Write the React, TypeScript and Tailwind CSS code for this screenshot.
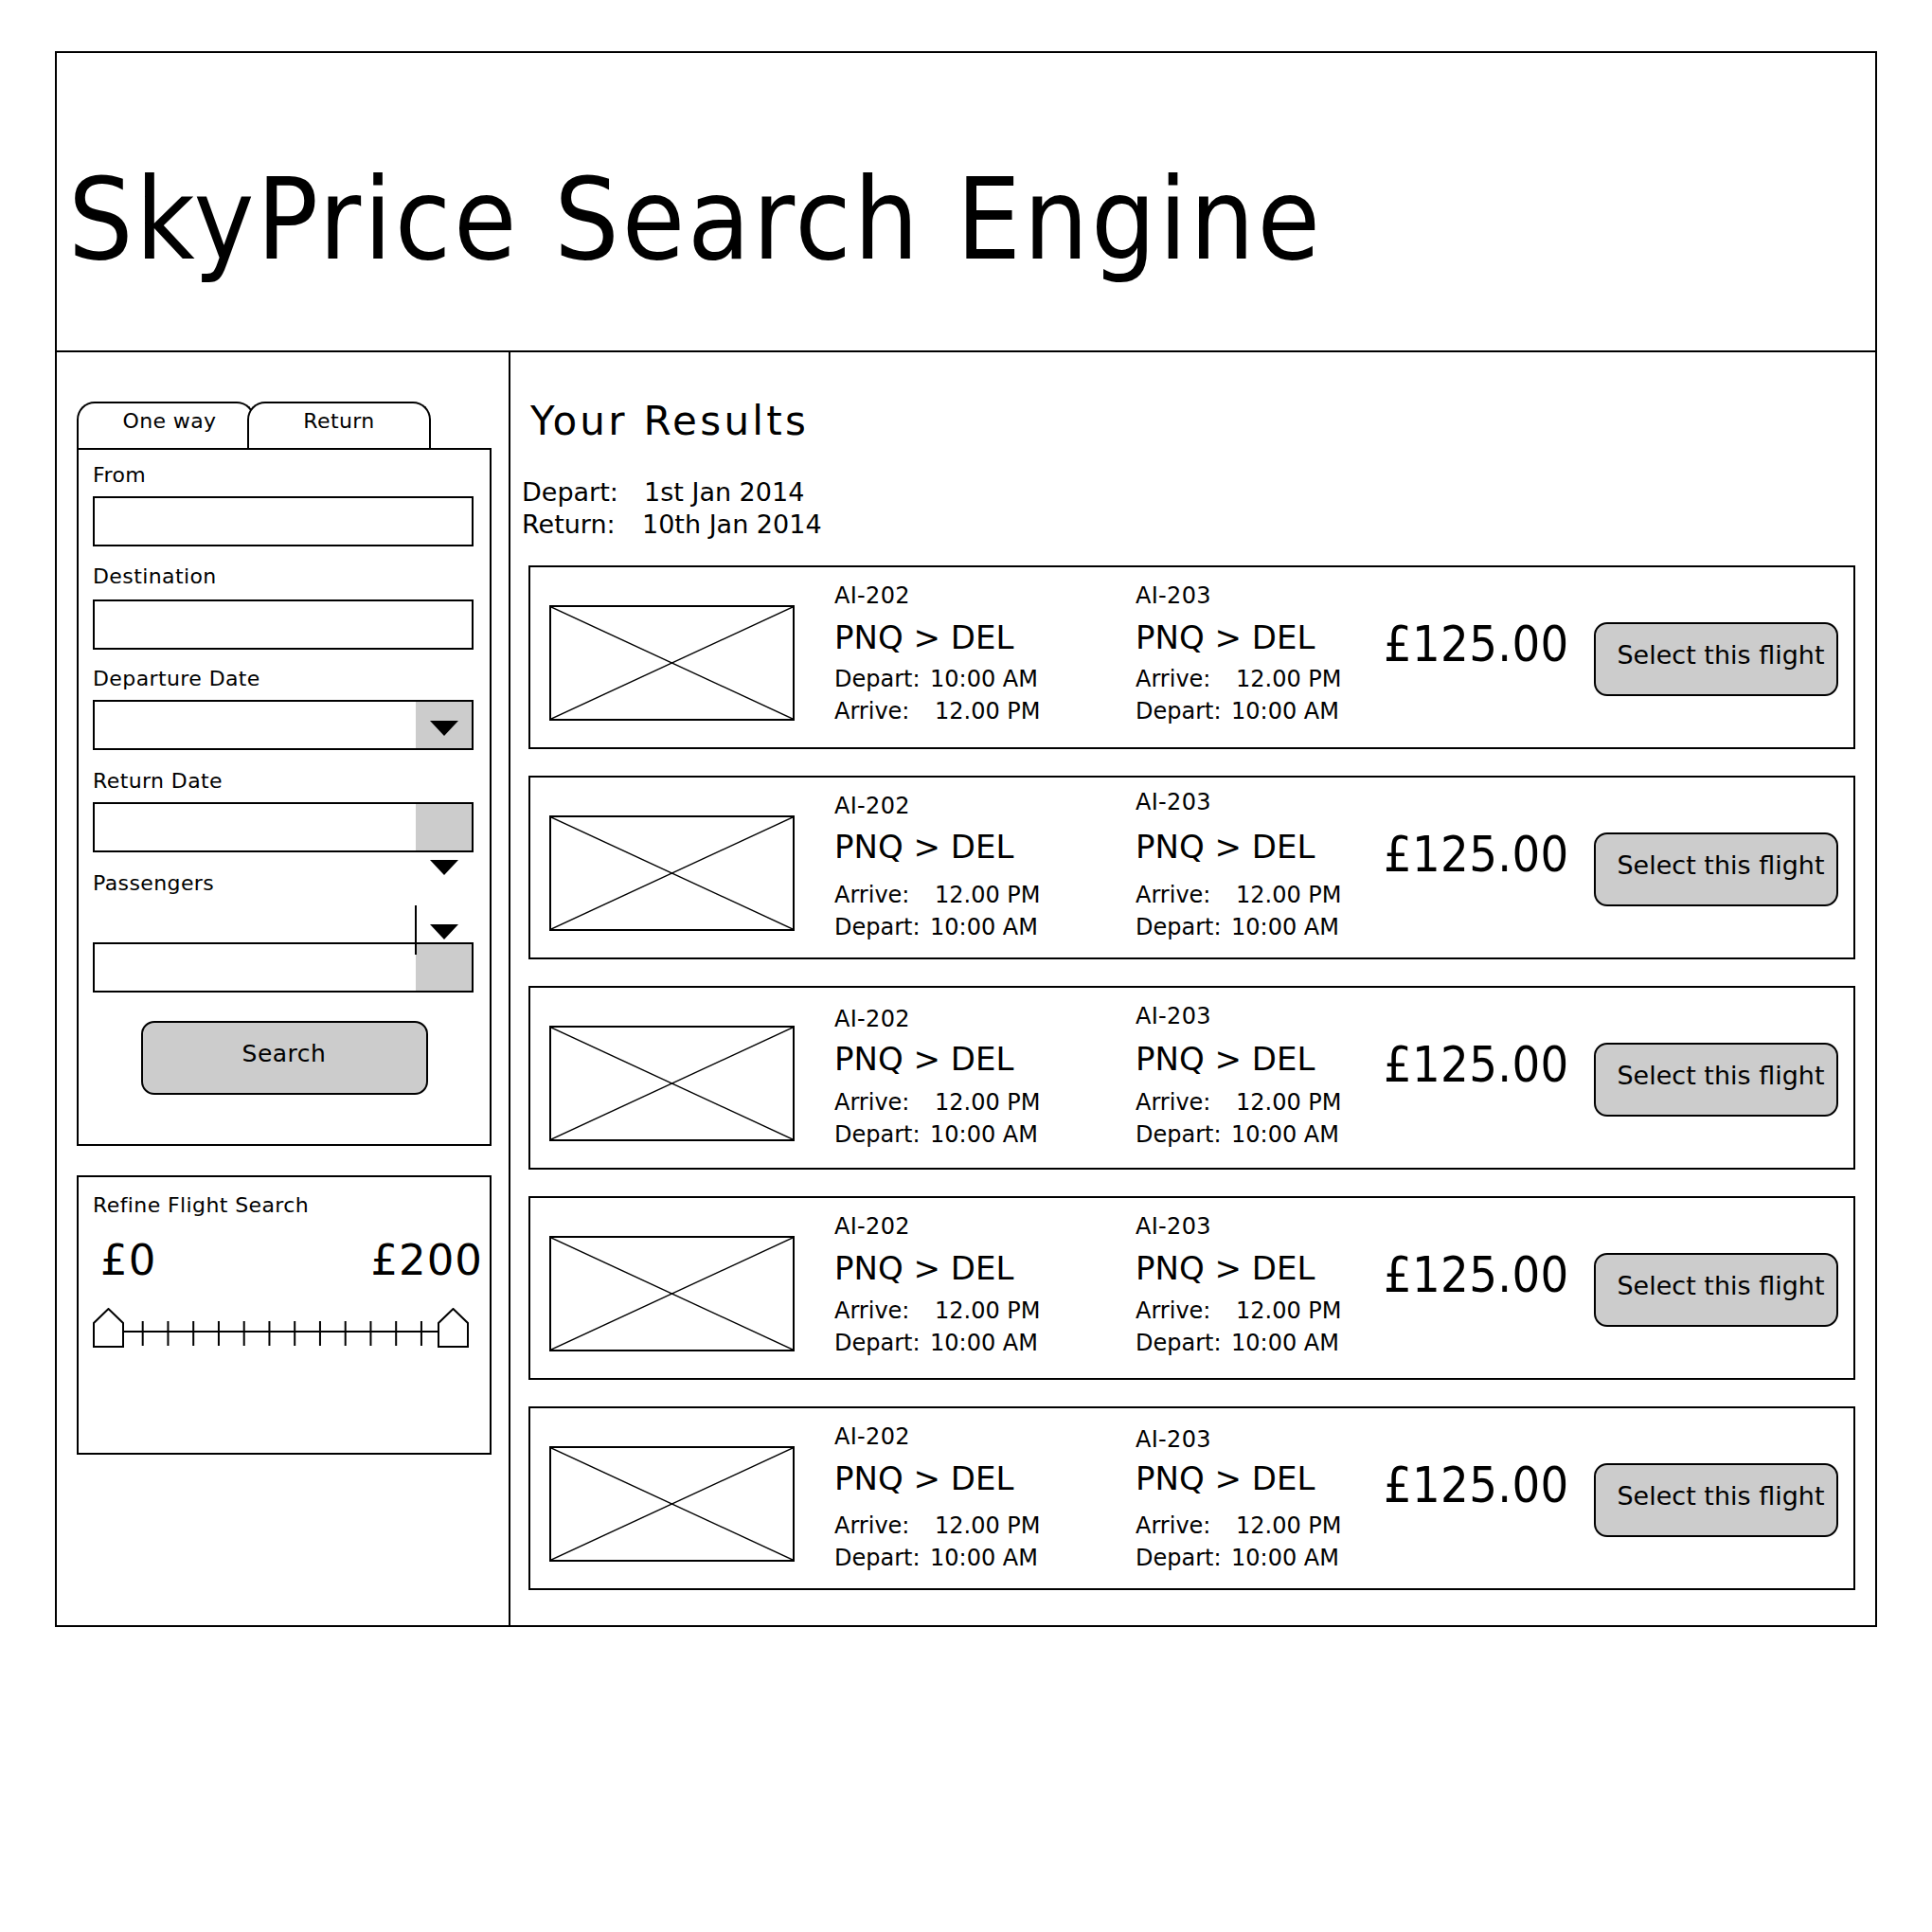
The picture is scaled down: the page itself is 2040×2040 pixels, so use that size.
import React from 'react';

type TimeLine = { label: 'Depart:' | 'Arrive:'; value: string };

type Leg = {
  code: string;
  times: TimeLine[];
  // spacing classes, tuned per row to match the mockup
  top: string;
  routeGap: string;
  timesGap: string;
};

type Flight = { legs: [Leg, Leg] };

const DEP: TimeLine = { label: 'Depart:', value: '10:00 AM' };
const ARR: TimeLine = { label: 'Arrive:', value: '12.00 PM' };

const flights: Flight[] = [
  {
    legs: [
      { code: 'AI-202', times: [DEP, ARR], top: 'pt-[15px]', routeGap: 'mt-[7px]', timesGap: 'mt-[5px]' },
      { code: 'AI-203', times: [ARR, DEP], top: 'pt-[15px]', routeGap: 'mt-[7px]', timesGap: 'mt-[5px]' },
    ],
  },
  {
    legs: [
      { code: 'AI-202', times: [ARR, DEP], top: 'pt-[15px]', routeGap: 'mt-[6px]', timesGap: 'mt-[12px]' },
      { code: 'AI-203', times: [ARR, DEP], top: 'pt-[11px]', routeGap: 'mt-[10px]', timesGap: 'mt-[12px]' },
    ],
  },
  {
    legs: [
      { code: 'AI-202', times: [ARR, DEP], top: 'pt-[18px]', routeGap: 'mt-[5px]', timesGap: 'mt-[7px]' },
      { code: 'AI-203', times: [ARR, DEP], top: 'pt-[15px]', routeGap: 'mt-[8px]', timesGap: 'mt-[7px]' },
    ],
  },
  {
    legs: [
      { code: 'AI-202', times: [ARR, DEP], top: 'pt-[15px]', routeGap: 'mt-[7px]', timesGap: 'mt-[6px]' },
      { code: 'AI-203', times: [ARR, DEP], top: 'pt-[15px]', routeGap: 'mt-[7px]', timesGap: 'mt-[6px]' },
    ],
  },
  {
    legs: [
      { code: 'AI-202', times: [ARR, DEP], top: 'pt-[15px]', routeGap: 'mt-[7px]', timesGap: 'mt-[11px]' },
      { code: 'AI-203', times: [ARR, DEP], top: 'pt-[18px]', routeGap: 'mt-[4px]', timesGap: 'mt-[11px]' },
    ],
  },
];

function DownTriangle() {
  return (
    <svg width="30" height="16" viewBox="0 0 30 16">
      <polygon points="0,0 30,0 15,16" fill="#000" />
    </svg>
  );
}

function FieldLabel({ children, className }: { children: React.ReactNode; className: string }) {
  return <div className={`text-[22px] leading-[30px] tracking-[0.4px] ${className}`}>{children}</div>;
}

function TextBox({ className }: { className: string }) {
  return <div className={`h-[53px] w-[402px] border-2 border-black bg-white ${className}`} />;
}

function SelectBox({ className, arrow }: { className: string; arrow?: boolean }) {
  return (
    <div className={`flex h-[53px] w-[402px] border-2 border-black bg-white ${className}`}>
      <div className="flex-1" />
      <div className="flex w-[59px] items-center justify-center bg-[#cccccc] pt-[6px]">
        {arrow && <DownTriangle />}
      </div>
    </div>
  );
}

function PriceSlider() {
  const ticks = Array.from({ length: 12 }, (_, i) => 52.7 + i * 26.75);
  return (
    <svg width="397" height="42" viewBox="0 0 397 42" className="mt-[25px] block">
      <line x1="33" y1="25" x2="364" y2="25" stroke="#000" strokeWidth="2" />
      {ticks.map((x) => (
        <line key={x} x1={x} y1="14" x2={x} y2="40" stroke="#000" strokeWidth="2" />
      ))}
      <polygon points="1,41 1,16 16.5,1 32,16 32,41" fill="#fff" stroke="#000" strokeWidth="2" />
      <polygon points="365,41 365,16 380.5,1 396,16 396,41" fill="#fff" stroke="#000" strokeWidth="2" />
    </svg>
  );
}

function SearchPanel() {
  return (
    <div>
      {/* tabs */}
      <div className="flex h-[49px]">
        <div className="w-[188px] rounded-t-[19px] border-2 border-b-0 border-black bg-white pl-[8px] pt-[4px] text-center text-[22px] leading-[30px] tracking-[0.4px]">
          One way
        </div>
        <div className="relative z-10 -ml-[8px] w-[194px] rounded-t-[19px] border-2 border-b-0 border-black bg-white pt-[4px] text-center text-[22px] leading-[30px] tracking-[0.4px]">
          Return
        </div>
      </div>

      <div className="relative h-[737px] w-[438px] border-2 border-black px-[15px] pt-[12px]">
        <FieldLabel className="">From</FieldLabel>
        <TextBox className="mt-[7px]" />

        <FieldLabel className="mt-[17px]">Destination</FieldLabel>
        <TextBox className="mt-[9px]" />

        <FieldLabel className="mt-[16px]">Departure Date</FieldLabel>
        <SelectBox className="mt-[7px]" arrow />

        <FieldLabel className="mt-[18px]">Return Date</FieldLabel>
        <SelectBox className="mt-[7px]" />

        <FieldLabel className="mt-[18px]">Passengers</FieldLabel>
        <SelectBox className="mt-[47px]" />

        <button className="mx-auto mt-[30px] flex h-[78px] w-[303px] items-center justify-center rounded-[14px] border-2 border-black bg-[#cccccc] pb-[9px] text-[25px] tracking-[0.5px]">
          Search
        </button>

        {/* stray arrows and caret left over in the mockup */}
        <div className="absolute left-[371px] top-[433px]">
          <DownTriangle />
        </div>
        <div className="absolute left-[371px] top-[501px]">
          <DownTriangle />
        </div>
        <div className="absolute left-[355px] top-[481px] h-[52px] w-[2px] bg-black" />
      </div>

      <div className="mt-[31px] h-[295px] w-[438px] border-2 border-black pl-[15px] pr-[7px] pt-[15px]">
        <FieldLabel className="">Refine Flight Search</FieldLabel>
        <div className="mt-[18px] flex justify-between pl-[8px] text-[45px] leading-[50px] tracking-[1px]">
          <span>£0</span>
          <span>£200</span>
        </div>
        <PriceSlider />
      </div>
    </div>
  );
}

function LegColumn({ leg, width }: { leg: Leg; width: string }) {
  return (
    <div className={`${width} ${leg.top} shrink-0`}>
      <div className="text-[24px] leading-[30px] tracking-[0.3px]">{leg.code}</div>
      <div className={`${leg.routeGap} text-[34px] leading-[44px]`}>PNQ &gt; DEL</div>
      <div className={leg.timesGap}>
        {leg.times.map((t, i) => (
          <div key={i} className="flex text-[24px] leading-[34px]">
            <span className={t.label === 'Depart:' ? 'w-[101px]' : 'w-[106px]'}>{t.label}</span>
            <span>{t.value}</span>
          </div>
        ))}
      </div>
    </div>
  );
}

function FlightCard({ flight }: { flight: Flight }) {
  return (
    <div className="flex h-[194px] items-start border-2 border-black">
      <div className="relative ml-[20px] mt-[40px] h-[122px] w-[259px] shrink-0 border-2 border-black">
        <svg className="absolute inset-0 h-full w-full" viewBox="0 0 100 100" preserveAspectRatio="none">
          <line x1="0" y1="0" x2="100" y2="100" stroke="#000" strokeWidth="1.5" vectorEffect="non-scaling-stroke" />
          <line x1="100" y1="0" x2="0" y2="100" stroke="#000" strokeWidth="1.5" vectorEffect="non-scaling-stroke" />
        </svg>
      </div>
      <div className="ml-[42px] flex">
        <LegColumn leg={flight.legs[0]} width="w-[318px]" />
        <LegColumn leg={flight.legs[1]} width="w-[262px]" />
      </div>
      <div className="mt-[51px] w-[222px] shrink-0 font-['DejaVu_Sans_Condensed','DejaVu_Sans',sans-serif] text-[52px] leading-[60px] tracking-[0.3px]">
        £125.00
      </div>
      <button className="mt-[58px] flex h-[78px] w-[258px] shrink-0 items-center justify-center rounded-[14px] border-2 border-black bg-[#cccccc] pb-[8px] pl-[10px] text-[27px]">
        Select this flight
      </button>
    </div>
  );
}

export default function App() {
  return (
    <div className="h-[2040px] w-[2040px] bg-white pl-[58px] pt-[54px] font-['DejaVu_Sans',sans-serif] text-black">
      <div className="flex h-[1664px] w-[1924px] flex-col border-2 border-black">
        <header className="h-[316px] shrink-0 border-b-2 border-black pl-[12px] pt-[116px]">
          <h1 className="font-['DejaVu_Sans_Condensed','DejaVu_Sans',sans-serif] text-[120px] leading-none tracking-[2.8px]">
            SkyPrice Search Engine
          </h1>
        </header>

        <div className="flex min-h-0 flex-1">
          <aside className="w-[479px] shrink-0 border-r-2 border-black pl-[21px] pt-[52px]">
            <SearchPanel />
          </aside>

          <main className="flex-1 pl-[19px] pr-[21px] pt-[48px]">
            <h2 className="pl-[2px] text-[42px] leading-[50px] tracking-[3.3px]">Your Results</h2>

            <div className="-ml-[7px] mt-[33px] text-[27px] leading-[34px]">
              <div className="flex">
                <span className="w-[129px]">Depart:</span>
                <span>1st Jan 2014</span>
              </div>
              <div className="flex">
                <span className="w-[127px]">Return:</span>
                <span>10th Jan 2014</span>
              </div>
            </div>

            <div className="mt-[26px] flex flex-col gap-[28px]">
              {flights.map((f, i) => (
                <FlightCard key={i} flight={f} />
              ))}
            </div>
          </main>
        </div>
      </div>
    </div>
  );
}
